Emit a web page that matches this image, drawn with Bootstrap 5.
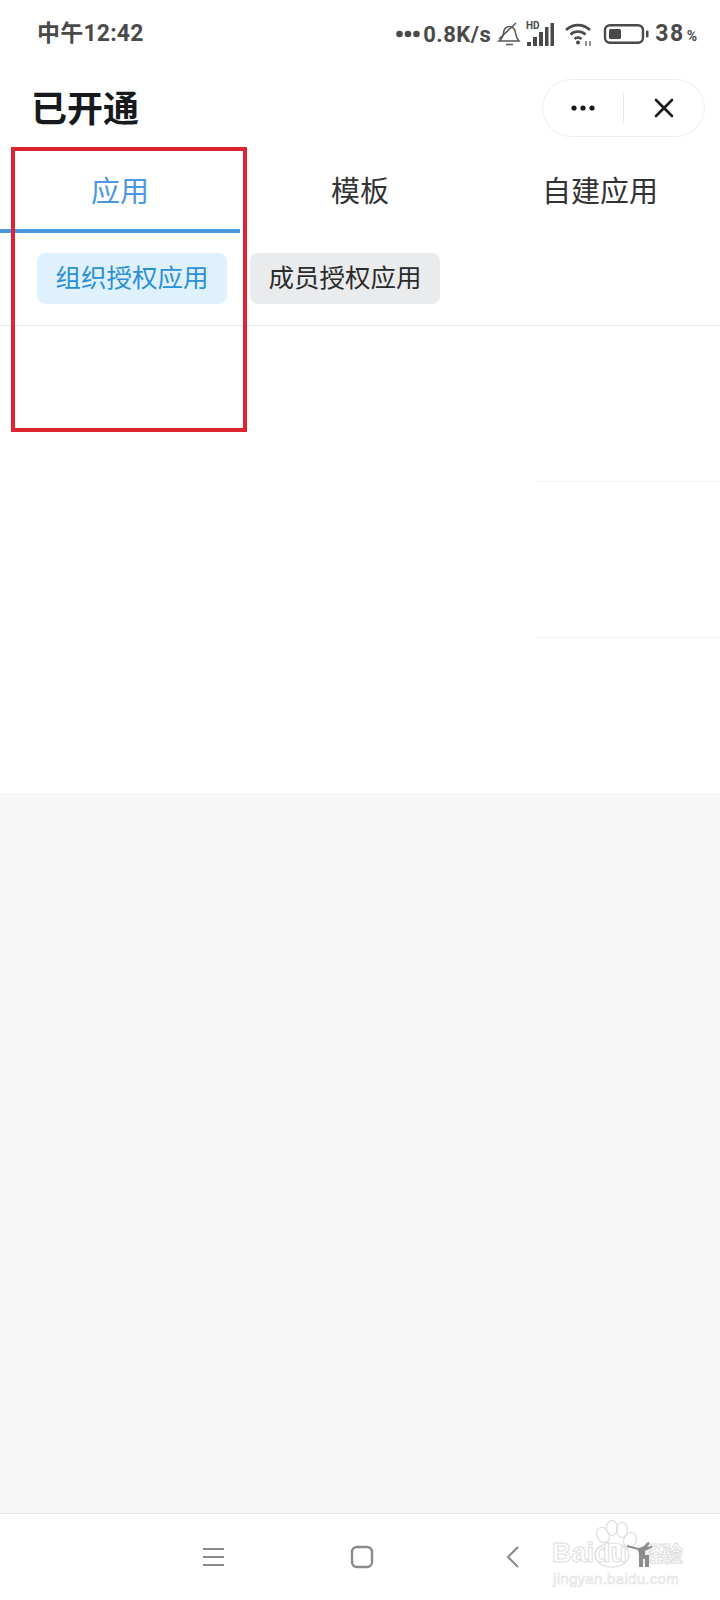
<!DOCTYPE html>
<html lang="zh-CN">
<head>
  <meta charset="UTF-8" />
  <meta name="viewport" content="width=device-width, initial-scale=1.0"/>
  <title>已开通</title>
  <link href="https://cdn.jsdelivr.net/npm/bootstrap@5.3.3/dist/css/bootstrap.min.css" rel="stylesheet"/>
  <style>
    body {
      width: 720px;
      height: 1600px;
      font-family: Roboto, "Noto Sans CJK SC", sans-serif;
      background: #fff;
      overflow: hidden;
    }
    .phone { height: 1600px; }

    /* status bar */
    .status-bar { height: 66px; padding: 2px 23px 0 37px; color: #4a4a4a; font-weight: 700; }
    .status-time { font-size: 23px; letter-spacing: .2px; }
    .status-dots { width: 24px; margin-right: 3px; }
    .status-speed { font-size: 22px; letter-spacing: .5px; margin-right: 6px; }
    .status-pct { font-size: 23px; letter-spacing: 1.5px; margin-left: 6px; }
    .status-pct span { font-size: 14px; letter-spacing: 0; margin-left: 2px; }
    .gap-bell { margin-right: 5px; }
    .gap-signal { margin-right: 9px; }

    /* title */
    .page-head { height: 82px; padding: 0 15px 0 31px; }
    .page-title { font-size: 36px; font-weight: 700; color: #17191c; margin: 6px 0 0; line-height: 1; }
    .capsule { width: 163px; height: 58px; border: 1px solid #eeeeee; border-radius: 29px; margin-top: 1px; }
    .capsule-part { flex: 1 1 0; }
    .capsule-sep { width: 1px; height: 30px; background: #e8e8e8; }

    /* tabs */
    .app-tabs { border: 0; }
    .app-tabs .nav-link {
      height: 85px;
      padding: 7px 0 0;
      border: 0;
      border-radius: 0;
      border-bottom: 4px solid transparent;
      background: none;
      color: #333;
      font-size: 29px;
      line-height: 74px;
    }
    .app-tabs .nav-link.active { color: #4a99e0; border-bottom-color: #4a99e0; }

    /* sub tabs */
    .sub-tabs { padding: 21px 0 21px 37px; gap: 23px; border-bottom: 1px solid #e9e9e9; }
    .sub-btn {
      width: 190px;
      height: 51px;
      padding: 0;
      border: 0;
      border-radius: 8px;
      font-size: 25.5px;
      line-height: 51px;
    }
    .sub-btn.is-on, .sub-btn.is-on:hover { background: #e0f1fe; color: #2c90d5; }
    .sub-btn.is-off, .sub-btn.is-off:hover { background: #eaebed; color: #2b2b2b; }

    /* empty list */
    .blank-row { height: 156px; }
    .blank-row i { display: block; width: 184px; height: 1px; background: #f2f2f2; }
    .blank-last { height: 155px; }
    .gray-area { background: #f7f7f7; }

    /* system nav */
    .sys-nav { height: 87px; border-top: 1px solid #e6e6e6; background: #fff; }
    .nav-menu { margin: -1px 0 0 203px; }
    .nav-home { margin: 0 0 0 126px; }
    .nav-back { margin: 0 0 0 132px; }

    /* red annotation and watermark lie over the page */
    .red-box {
      position: absolute;
      left: 11px;
      top: 147px;
      width: 236px;
      height: 285px;
      border: 4px solid #dc2531;
      pointer-events: none;
    }
    .watermark { position: absolute; left: 550px; top: 1520px; width: 135px; height: 70px; }
    .watermark svg { position: absolute; left: 0; top: 0; }
    .wm-brand {
      position: absolute;
      left: 2px;
      top: 18px;
      font: 700 27px "Liberation Sans", sans-serif;
      color: #fff;
      -webkit-text-stroke: 1px #dedede;
    }
    .wm-cn {
      position: absolute;
      left: 92px;
      top: 17px;
      font: 700 21px "Noto Sans CJK SC", sans-serif;
      letter-spacing: -1px;
      color: #fff;
      -webkit-text-stroke: 1px #dedede;
    }
    .wm-url {
      position: absolute;
      left: 3px;
      top: 50px;
      font: 400 15px "Liberation Sans", sans-serif;
      color: #fff;
      -webkit-text-stroke: .7px #e2e2e2;
      letter-spacing: .3px;
    }
  </style>
</head>
<body>
  <div class="phone d-flex flex-column">

    <div class="status-bar d-flex align-items-center">
      <span class="status-time">中午12:42</span>
      <div class="ms-auto d-flex align-items-center">
        <svg class="status-dots" height="8" viewBox="0 0 24 8"><circle cx="3.500" cy="4" r="3.300" fill="#4a4a4a"/><circle cx="12" cy="4" r="3.300" fill="#4a4a4a"/><circle cx="20.500" cy="4" r="3.300" fill="#4a4a4a"/></svg>
        <span class="status-speed">0.8K/s</span>
        <svg width="24" height="26" viewBox="0 0 24 26" fill="none" stroke="#555" stroke-width="1.500" class="gap-bell">
          <path d="M2 20c3-2 4-4 4.500-8 .5-4 3-6.500 6-6.500s5.500 2.500 6 6.500c.5 4 1.500 6 3.500 8z"/>
          <path d="M9 23.500h7M2 18L19 2"/>
        </svg>
        <svg width="29" height="28" viewBox="0 0 29 28" class="gap-signal" fill="#4a4a4a">
          <text x="0" y="9" font-family="Roboto, sans-serif" font-size="10" font-weight="700">HD</text>
          <rect x="1" y="22" width="4" height="4"/><rect x="7" y="17" width="4" height="9"/><rect x="13" y="12" width="4" height="14"/><rect x="19" y="7" width="3.500" height="19"/><rect x="24.500" y="3" width="3.500" height="23"/>
        </svg>
        <svg width="30" height="26" viewBox="0 0 30 26" fill="none" stroke="#4a4a4a" stroke-width="2.600" class="me-2">
          <path d="M2 9c7-6.500 17-6.500 24 0M6.500 13.500c4.500-4 10.500-4 15 0M10.500 18c2-2 5-2 7 0"/>
          <circle cx="14" cy="21.500" r="2" fill="#4a4a4a" stroke="none"/>
          <path d="M22 25v-5M26 20v5" stroke-width="1.200"/>
        </svg>
        <svg width="47" height="22" viewBox="0 0 47 22">
          <rect x="3" y="2.200" width="38" height="17.600" rx="5" fill="none" stroke="#4a4a4a" stroke-width="2.400"/>
          <rect x="7" y="6" width="12" height="10" rx="1.500" fill="#4a4a4a"/>
          <rect x="44" y="7.500" width="2.500" height="7" rx="1" fill="#4a4a4a"/>
        </svg>
        <span class="status-pct">38<span>%</span></span>
      </div>
    </div>

    <div class="page-head d-flex align-items-center justify-content-between">
      <h1 class="page-title">已开通</h1>
      <div class="capsule d-flex align-items-center">
        <div class="capsule-part d-flex justify-content-center">
          <svg width="24" height="6" viewBox="0 0 24 6" fill="#17191c"><circle cx="3" cy="3" r="2.600"/><circle cx="12" cy="3" r="2.600"/><circle cx="21" cy="3" r="2.600"/></svg>
        </div>
        <div class="capsule-sep"></div>
        <div class="capsule-part d-flex justify-content-center">
          <svg width="20" height="20" viewBox="0 0 20 20" stroke="#17191c" stroke-width="2.600" stroke-linecap="round"><path d="M2 2l16 16M18 2L2 18"/></svg>
        </div>
      </div>
    </div>

    <ul class="nav nav-tabs nav-justified app-tabs">
      <li class="nav-item"><a class="nav-link active" href="#">应用</a></li>
      <li class="nav-item"><a class="nav-link" href="#">模板</a></li>
      <li class="nav-item"><a class="nav-link" href="#">自建应用</a></li>
    </ul>

    <div class="sub-tabs d-flex">
      <button type="button" class="btn sub-btn is-on">组织授权应用</button>
      <button type="button" class="btn sub-btn is-off">成员授权应用</button>
    </div>

    <div class="blank-row d-flex justify-content-end align-items-end"><i></i></div>
    <div class="blank-row d-flex justify-content-end align-items-end"><i></i></div>
    <div class="blank-last"></div>

    <div class="gray-area flex-grow-1"></div>

    <div class="sys-nav d-flex align-items-center">
      <svg class="nav-menu" width="21" height="20" viewBox="0 0 21 20" stroke="#8a8a8a" stroke-width="2"><path d="M0 2h21M0 10h21M0 18h21"/></svg>
      <svg class="nav-home" width="24" height="24" viewBox="0 0 24 24" fill="none" stroke="#8a8a8a" stroke-width="2.400"><rect x="2" y="2" width="20" height="20" rx="5"/></svg>
      <svg class="nav-back" width="14" height="24" viewBox="0 0 14 24" fill="none" stroke="#8a8a8a" stroke-width="2"><path d="M12 2L2 12l10 10"/></svg>
    </div>
  </div>

  <div class="red-box"></div>

  <div class="watermark">
    <span class="wm-brand">Baidu</span>
    <span class="wm-cn">经验</span>
    <span class="wm-url">jingyan.baidu.com</span>
    <svg width="135" height="70" viewBox="0 0 135 70" fill="none" stroke="#dedede" stroke-width="1.200">
      <ellipse cx="53" cy="15" rx="6" ry="8" transform="rotate(-25 53 15)"/>
      <ellipse cx="62" cy="8" rx="5.500" ry="7.500"/>
      <ellipse cx="72" cy="10" rx="5.500" ry="7.500"/>
      <ellipse cx="80" cy="20" rx="6" ry="8" transform="rotate(25 80 20)"/>
      <ellipse cx="62" cy="35" rx="17" ry="12"/>
      <!-- dark figure over the watermark -->
      <path fill="#8d8d8d" stroke="none" d="M77 25l12 3 5-2 4-4 2 1-3 4 5-1 1 1-8 4v4h4v12h-4v-8h-2v8h-4V34l-1-4-11-3z"/>
    </svg>
  </div>

  <script src="https://cdn.jsdelivr.net/npm/bootstrap@5.3.3/dist/js/bootstrap.bundle.min.js"></script>
</body>
</html>
